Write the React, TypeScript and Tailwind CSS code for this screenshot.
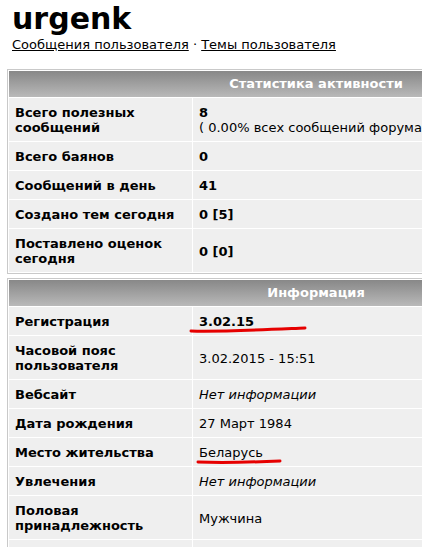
import React from "react";

type Row = {
  label: string;
  value: React.ReactNode;
  mark?: "reg" | "city";
};

const stats: Row[] = [
  {
    label: "Всего полезных сообщений",
    value: (
      <>
        <span className="font-bold">8</span>
        <br />
        <span className="whitespace-nowrap">( 0.00% всех сообщений форума )</span>
      </>
    ),
  },
  { label: "Всего баянов", value: <span className="font-bold">0</span> },
  { label: "Сообщений в день", value: <span className="font-bold">41</span> },
  { label: "Создано тем сегодня", value: <span className="font-bold">0 [5]</span> },
  { label: "Поставлено оценок сегодня", value: <span className="font-bold">0 [0]</span> },
];

const info: Row[] = [
  { label: "Регистрация", value: <span className="font-bold">3.02.15</span>, mark: "reg" },
  { label: "Часовой пояс пользователя", value: "3.02.2015 - 15:51" },
  { label: "Вебсайт", value: <i>Нет информации</i> },
  { label: "Дата рождения", value: "27 Март 1984" },
  { label: "Место жительства", value: "Беларусь", mark: "city" },
  { label: "Увлечения", value: <i>Нет информации</i> },
  { label: "Половая принадлежность", value: "Мужчина" },
  { label: "Род занятий", value: <i>Нет информации</i> },
];

// hand-drawn red strokes from the screenshot
function RedMark({ kind }: { kind: "reg" | "city" }) {
  if (kind === "reg") {
    return (
      <svg className="absolute left-[-10px] top-[10px] z-10" width="120" height="10" viewBox="0 0 120 10">
        <path d="M2 7 C 30 8, 70 6, 116 4" stroke="#e60000" strokeWidth="3" fill="none" strokeLinecap="round" />
      </svg>
    );
  }
  return (
    <svg className="absolute left-[-3px] top-[13px] z-10" width="88" height="8" viewBox="0 0 88 8">
      <path d="M2 4 C 30 5, 60 4, 84 3" stroke="#e60000" strokeWidth="3" fill="none" strokeLinecap="round" />
    </svg>
  );
}

function StatTable({ title, rows }: { title: string; rows: Row[] }) {
  return (
    <table className="w-[618px] border-separate border-spacing-px border border-[#c9c9c9] bg-white">
      <thead>
        <tr>
          <th
            colSpan={2}
            className="h-[26px] bg-gradient-to-b from-[#888888] to-[#b9b9b9] text-center text-[13px] font-bold text-white"
          >
            {title}
          </th>
        </tr>
      </thead>
      <tbody>
        {rows.map((r) => (
          <tr key={r.label}>
            <td className="w-[183px] bg-[#efefef] px-[6px] pt-[7px] pb-[6px] align-middle text-[13px] leading-[15px] font-bold text-black">
              {r.label}
            </td>
            <td className="bg-[#efefef] px-[6px] pt-[7px] pb-[6px] align-middle text-[13px] leading-[15px] text-black">
              <div className="relative">
                {r.value}
                {r.mark && <RedMark kind={r.mark} />}
              </div>
            </td>
          </tr>
        ))}
      </tbody>
    </table>
  );
}

export default function App() {
  return (
    <div className="h-[547px] w-[422px] overflow-hidden bg-white font-['DejaVu_Sans',Verdana,sans-serif] text-black">
      <div className="px-[12px] pt-[1px]">
        <h1 className="text-[30px] leading-[36px] font-bold">urgenk</h1>
        <div className="text-[13px] leading-[16px]">
          <a href="#" className="underline">Сообщения пользователя</a>
          {" · "}
          <a href="#" className="underline">Темы пользователя</a>
        </div>
      </div>
      <div className="mt-[16px] flex flex-col gap-[4px] pl-[7px]">
        <StatTable title="Статистика активности" rows={stats} />
        <StatTable title="Информация" rows={info} />
      </div>
    </div>
  );
}
